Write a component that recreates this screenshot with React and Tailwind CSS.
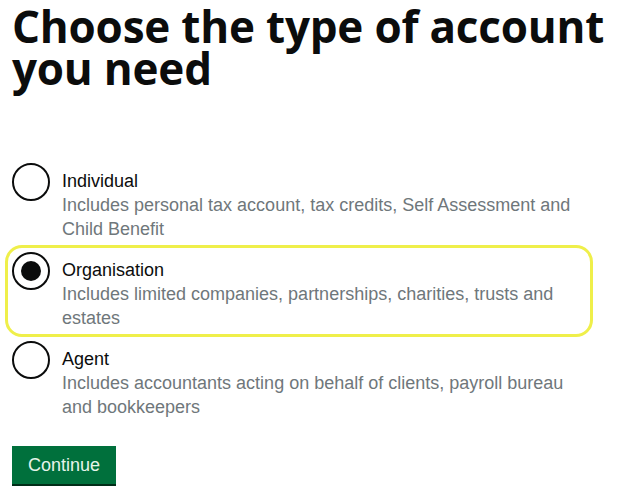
import React from 'react';

const options = [
  {
    label: 'Individual',
    hint: 'Includes personal tax account, tax credits, Self Assessment and Child Benefit',
    checked: false,
  },
  {
    label: 'Organisation',
    hint: 'Includes limited companies, partnerships, charities, trusts and estates',
    checked: true,
  },
  {
    label: 'Agent',
    hint: 'Includes accountants acting on behalf of clients, payroll bureau and bookkeepers',
    checked: false,
  },
];

const Radio = ({ checked }) => (
  <span className="flex h-[38px] w-[38px] shrink-0 items-center justify-center rounded-full border-2 border-[#0b0c0c] bg-white">
    {checked && <span className="h-[20px] w-[20px] rounded-full bg-[#0b0c0c]" />}
  </span>
);

const Option = ({ label, hint, checked }) => (
  <div
    className={
      'flex w-[574px] items-start gap-[12px] ' +
      (checked ? 'rounded-[10px] outline-[3px] outline-offset-[4px] outline-[#efef4a]' : '')
    }
  >
    <Radio checked={checked} />
    <div className="pt-[6px] text-[18px] leading-[24px]">
      <div className="text-[#0b0c0c]">{label}</div>
      <div className="text-[#6f777b]">{hint}</div>
    </div>
  </div>
);

const App = () => {
  return (
    <div className="min-h-[503px] bg-white px-3 font-['Liberation_Sans',Arial,sans-serif]">
      <h1 className="pt-[5px] font-['Open_Sans',sans-serif] text-[44px] font-bold leading-[42px] tracking-[-0.2px] text-[#0b0c0c]">
        Choose the type of account you need
      </h1>

      <div className="mt-[74px] flex flex-col gap-[11px]">
        {options.map((o) => (
          <Option key={o.label} {...o} />
        ))}
      </div>

      <button className="mt-[27px] bg-[#00703c] px-[16px] py-[7px] text-[18px] leading-[24px] text-[#e6f4ea] shadow-[0_2px_0_#002d18]">
        Continue
      </button>
    </div>
  );
};

export default App;
